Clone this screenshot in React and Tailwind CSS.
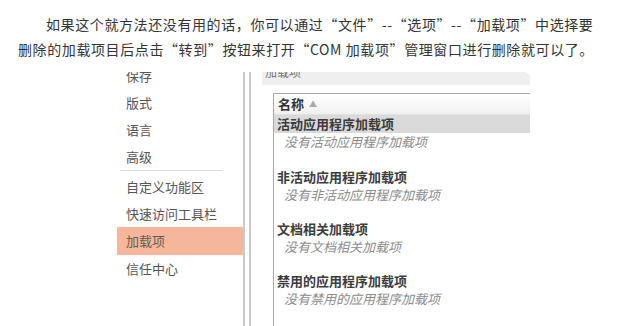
import React from 'react';

const FONT = { fontFamily: '"Noto Sans CJK SC", "Noto Sans", sans-serif' };

// --- Left nav of the options dialog ---
const NavItem = ({ label, active }) => (
  <div
    className={
      active
        ? 'ml-[17px] h-[28px] pl-[9px] flex items-center bg-[#f5b69b] text-[#6a5a52]'
        : 'h-[27px] pl-[26px] flex items-center text-[#555]'
    }
  >
    {label}
  </div>
);

const Group = ({ title, empty, selected }) => (
  <div>
    <div
      className={`h-[18px] pl-[3px] flex items-center font-bold text-[#3c3c3c] ${
        selected ? 'bg-[#dadada]' : ''
      }`}
    >
      {title}
    </div>
    <div className="h-[18px] pl-[10px] flex items-center italic text-[#8c8c8c]">{empty}</div>
  </div>
);

const App = () => {
  return (
    <div className="w-[620px] h-[326px] bg-white overflow-hidden" style={FONT}>
      {/* intro paragraph */}
      <div className="pt-[12px] pl-[18px] text-[14px] leading-[25px] text-[#333] tracking-[0.6px]">
        <div className="pl-[28px] whitespace-nowrap">
          如果这个就方法还没有用的话，你可以通过“文件”--“选项”--“加载项”中选择要
        </div>
        <div className="whitespace-nowrap">
          删除的加载项目后点击“转到”按钮来打开“COM 加载项”管理窗口进行删除就可以了。
        </div>
      </div>

      {/* screenshot of the dialog */}
      <div className="mt-[10px] ml-[100px] w-[430px] h-[254px] flex overflow-hidden text-[13px]">
        <div className="w-[143px] -mt-[10px] flex flex-col">
          <NavItem label="保存" />
          <NavItem label="版式" />
          <NavItem label="语言" />
          <NavItem label="高级" />
          <div className="mx-[20px] h-px bg-[#dedede] mb-[2px]" />
          <NavItem label="自定义功能区" />
          <NavItem label="快速访问工具栏" />
          <NavItem label="加载项" active />
          <NavItem label="信任中心" />
        </div>

        {/* double divider */}
        <div className="flex gap-[4px]">
          <div className="w-[2px] bg-[#c9c9c9]" />
          <div className="w-[2px] bg-[#c9c9c9]" />
        </div>

        <div className="ml-[11px] flex-1 flex flex-col">
          <div className="h-[13px] bg-[#efefef] rounded-tr-[6px] overflow-hidden pl-[3px]">
            <div className="-mt-[9px] text-[12px] text-[#777]">加载项</div>
          </div>
          <div className="mt-[8px] ml-[11px] flex-1 border-l border-t border-[#a9a9a9]">
            <div className="h-[21px] pl-[4px] flex items-center gap-[5px] bg-gradient-to-b from-white to-[#f0f0f0] border-b border-[#e2e2e2]">
              <span className="font-bold text-[#333]">名称</span>
              <span className="text-[8px] text-[#aaa]">▲</span>
            </div>
            <Group title="活动应用程序加载项" empty="没有活动应用程序加载项" selected />
            <div className="h-[17px]" />
            <Group title="非活动应用程序加载项" empty="没有非活动应用程序加载项" />
            <div className="h-[16px]" />
            <Group title="文档相关加载项" empty="没有文档相关加载项" />
            <div className="h-[16px]" />
            <Group title="禁用的应用程序加载项" empty="没有禁用的应用程序加载项" />
          </div>
        </div>
      </div>
    </div>
  );
};

export default App;
